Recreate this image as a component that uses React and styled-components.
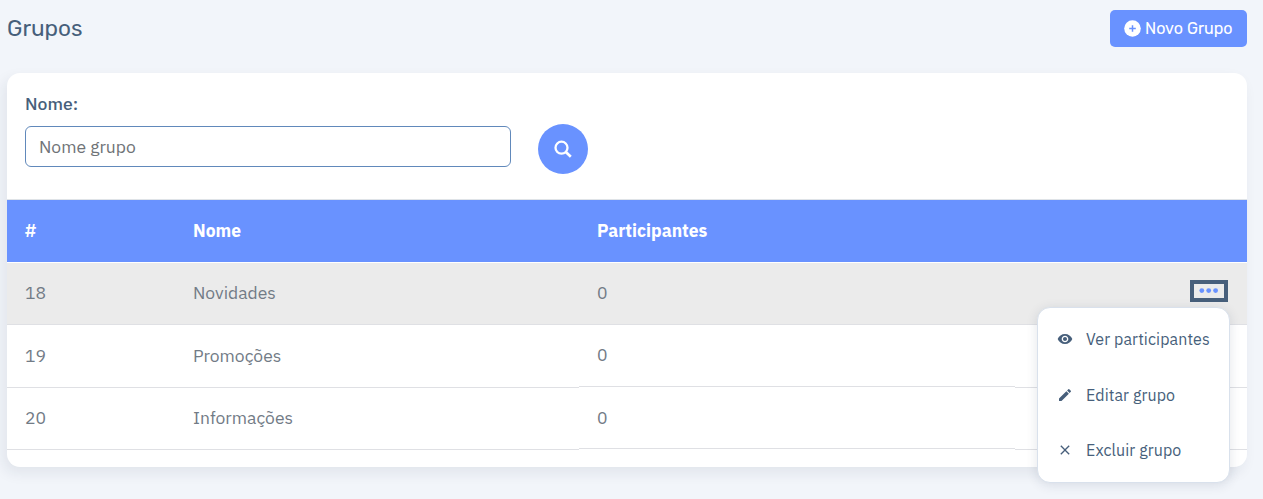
import React from "react";
import styled, { createGlobalStyle } from "styled-components";
import { MdVisibility, MdEdit, MdClose } from "react-icons/md";

const GlobalStyle = createGlobalStyle`
  * { box-sizing: border-box; }
  body {
    margin: 0;
    background: #f2f5fa;
    color: #475f7b;
    font-family: "IBM Plex Sans", Roboto, sans-serif;
    overflow: hidden;
  }
`;

const Page = styled.main`
  height: 499px;
  padding: 10px 16px 0 7px;
`;

const PageHeader = styled.header`
  display: flex;
  justify-content: space-between;
  height: 63px;
`;

const Title = styled.h1`
  margin: 0;
  font-family: Rubik, Roboto, sans-serif;
  font-size: 22.6px;
  font-weight: 400;
  line-height: 37px;
`;

const PrimaryButton = styled.button`
  display: flex;
  align-items: center;
  gap: 4px;
  width: 137px;
  height: 37px;
  padding: 0 0 0 14px;
  border: 0;
  border-radius: 5px;
  background: #6992ff;
  color: #fff;
  font-family: Rubik, Roboto, sans-serif;
  font-size: 16.1px;
  white-space: nowrap;
  svg { flex: none; margin-top: -1px; }
`;

const Card = styled.section`
  height: 394px;
  border-radius: 13px;
  background: #fff;
  box-shadow: -4px 6px 14px 0 rgba(25, 42, 70, 0.08);
`;

const Filter = styled.form`
  display: flex;
  height: 126px;
  padding: 21px 18px 0;
`;

const Field = styled.label`
  display: flex;
  flex-direction: column;
  gap: 12px;
  width: 486px;
  font-size: 17.6px;
  font-weight: 500;
  line-height: 20px;
`;

const Input = styled.input`
  height: 41px;
  padding: 0 13px;
  border: 1px solid #6189bb;
  border-radius: 6px;
  color: #475f7b;
  font-family: inherit;
  font-size: 17.5px;
  outline: 0;
  &::placeholder { color: #6f7377; opacity: 1; }
`;

const SearchButton = styled.button`
  display: grid;
  place-items: center;
  width: 50px;
  height: 50px;
  margin: 30px 0 0 27px;
  padding: 0;
  border: 0;
  border-radius: 50%;
  background: #6992ff;
  color: #fff;
`;

const Row = styled.div`
  display: grid;
  grid-template-columns: 168px 404px 436px 232px;
  height: ${(p) => p.$height}px;
  background: ${(p) => (p.$active ? "#ebebeb" : "#fff")};
`;

const HeadRow = styled(Row)`
  height: 64px;
  border-top: 1px solid #dfe3e7;
  border-bottom: 1px solid #fff;
  background: #6992ff;
  color: #fff;
  font-size: 17.5px;
  font-weight: 700;
  line-height: 62px;
`;

const HeadCell = styled.div`
  padding-left: 18px;
`;

const Cell = styled.div`
  height: calc(100% - ${(p) => (p.$raised ? 1 : 0)}px);
  padding: ${(p) => p.$top || 0}px 18px 0;
  border-bottom: 1px solid #dfe0e4;
  color: #727b86;
  font-size: 17.5px;
  line-height: 59px;
`;

const ActionCell = styled(Cell)`
  position: relative;
  display: flex;
  justify-content: flex-end;
  padding-top: 17px;
`;

const MenuTrigger = styled.button`
  display: flex;
  align-items: center;
  justify-content: center;
  width: 38px;
  height: 22px;
  margin-right: 1px;
  padding: 0;
  border: 4px solid #475f7b;
  background: transparent;
  color: #6992ff;
  svg { flex: none; }
`;

const Menu = styled.div`
  position: absolute;
  z-index: 2;
  top: 44px;
  right: 17px;
  display: flex;
  flex-direction: column;
  width: 193px;
  height: 176px;
  padding: 3px 0 0 19px;
  border: 1px solid #d9e1ec;
  border-radius: 13px;
  background: #fff;
  box-shadow: 0 2px 12px rgba(25, 42, 70, 0.12);
`;

const MenuItem = styled.div`
  display: flex;
  align-items: center;
  gap: 13px;
  height: 55.8px;
  color: #475f7b;
  font-size: 16px;
  line-height: 24px;
  letter-spacing: 0.1px;
  white-space: nowrap;
  svg { flex: none; }
`;

const groups = [
  { id: 18, name: "Novidades", count: 0, height: 62 },
  { id: 19, name: "Promoções", count: 0, height: 63, top: 1 },
  { id: 20, name: "Informações", count: 0, height: 62 },
];

function PlusCircleIcon() {
  return (
    <svg width="17" height="17" viewBox="0 0 17 17">
      <circle cx="8.5" cy="8.5" r="8.3" fill="currentColor" />
      <path d="M8.5 5.2v6.6M5.2 8.5h6.6" stroke="#6992ff" strokeWidth="1.5" />
    </svg>
  );
}

function SearchIcon() {
  return (
    <svg width="18" height="18" viewBox="0 0 18 18" fill="none" stroke="currentColor">
      <circle cx="7.5" cy="7.7" r="6" strokeWidth="2.3" />
      <path d="M11.6 11.8l5.2 4.9" strokeWidth="2.7" />
    </svg>
  );
}

function DotsIcon() {
  return (
    <svg width="20" height="6" viewBox="0 0 20 6" fill="currentColor">
      <circle cx="2.8" cy="2.6" r="2.4" />
      <circle cx="9.7" cy="2.6" r="2.4" />
      <circle cx="16.6" cy="2.6" r="2.4" />
    </svg>
  );
}

function ActionsMenu() {
  return (
    <Menu>
      <MenuItem><MdVisibility size={16} />Ver participantes</MenuItem>
      <MenuItem><MdEdit size={16} />Editar grupo</MenuItem>
      <MenuItem><MdClose size={16} />Excluir grupo</MenuItem>
    </Menu>
  );
}

export default function App() {
  return (
    <>
      <GlobalStyle />
      <Page>
        <PageHeader>
          <Title>Grupos</Title>
          <PrimaryButton>
            <PlusCircleIcon />
            Novo Grupo
          </PrimaryButton>
        </PageHeader>
        <Card>
          <Filter>
            <Field>
              Nome:
              <Input placeholder="Nome grupo" />
            </Field>
            <SearchButton type="button"><SearchIcon /></SearchButton>
          </Filter>
          <HeadRow>
            <HeadCell>#</HeadCell>
            <HeadCell>Nome</HeadCell>
            <HeadCell>Participantes</HeadCell>
            <HeadCell />
          </HeadRow>
          {groups.map((g, i) => (
            <Row key={g.id} $active={i === 0} $height={g.height}>
              <Cell $top={g.top}>{g.id}</Cell>
              <Cell $top={g.top}>{g.name}</Cell>
              <Cell $raised={i > 0}>{g.count}</Cell>
              <ActionCell>
                {i === 0 && (
                  <>
                    <MenuTrigger><DotsIcon /></MenuTrigger>
                    <ActionsMenu />
                  </>
                )}
              </ActionCell>
            </Row>
          ))}
        </Card>
      </Page>
    </>
  );
}
